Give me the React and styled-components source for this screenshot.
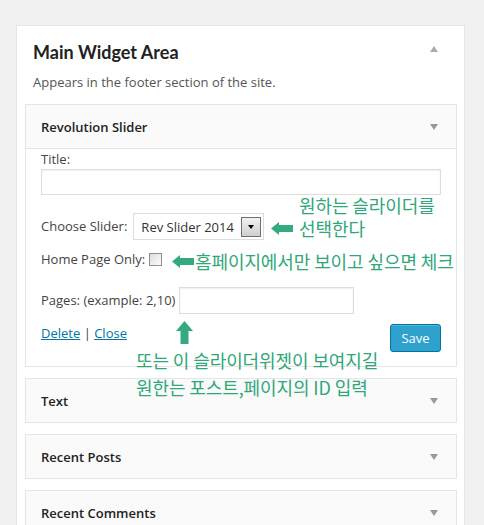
import React from 'react';
import styled, { createGlobalStyle } from 'styled-components';

const GlobalStyle = createGlobalStyle`
  html, body {
    margin: 0;
    padding: 0;
    background: #f1f1f1;
    font-family: "Open Sans", "Noto Sans", sans-serif;
    font-size: 13px;
    color: #444;
  }
`;

const Page = styled.div`
  padding: 25px 19px 0 16px;
  height: 500px;
  overflow: hidden;
`;

const Sidebar = styled.div`
  background: #fff;
  border: 1px solid #e5e5e5;
  border-bottom: none;
  padding: 0 7px 20px 8px;
  width: 432px;
`;

const SidebarHead = styled.div`
  position: relative;
  padding: 14px 8px 0 8px;
  height: 78px;
  box-sizing: border-box;

  h3 {
    margin: 0;
    font-family: Lato, "Open Sans", sans-serif;
    font-size: 18px;
    font-weight: 700;
    color: #222;
    line-height: 24px;
  }

  p {
    margin: 8px 0 0;
    font-size: 13px;
    color: #555;
    line-height: 20px;
  }
`;

const Triangle = styled.span`
  position: absolute;
  right: ${(p) => p.$right}px;
  top: ${(p) => p.$top}px;
  width: 0;
  height: 0;
  border-left: 4px solid transparent;
  border-right: 4px solid transparent;
  ${(p) =>
    p.$up
      ? 'border-bottom: 6px solid #aaa;'
      : 'border-top: 6px solid #999;'}
`;

const WidgetList = styled.div`
  display: flex;
  flex-direction: column;
  gap: 11px;
`;

const Widget = styled.div`
  position: relative;
  border: 1px solid #e5e5e5;
  background: #fafafa;
`;

const WidgetTop = styled.div`
  position: relative;
  height: 43px;
  display: flex;
  align-items: center;
  padding: 0 15px;
  font-weight: 600;
  color: #222;
  font-size: 13px;
  border-bottom: ${(p) => (p.$open ? '1px solid #e5e5e5' : 'none')};
`;

const WidgetBody = styled.div`
  background: #fff;
  padding: 0 15px 14px;
  display: flex;
  flex-direction: column;
`;

const Label = styled.label`
  line-height: 19px;
  color: #444;
`;

const TextInput = styled.input`
  box-sizing: border-box;
  height: ${(p) => p.$h || 26}px;
  width: ${(p) => (p.$w ? `${p.$w}px` : '100%')};
  border: 1px solid #ddd;
  box-shadow: inset 0 1px 2px rgba(0, 0, 0, 0.07);
  margin: 0;
  padding: 3px 5px;
  font: inherit;
`;

const Row = styled.div`
  display: flex;
  align-items: center;
  gap: ${(p) => p.$gap || 4}px;
  margin-top: ${(p) => p.$mt}px;
`;

const SelectBox = styled.div`
  box-sizing: border-box;
  width: 131px;
  height: 27px;
  border: 1px solid #ddd;
  display: flex;
  align-items: center;
  justify-content: space-between;
  padding: 0 2px 0 7px;
  font-size: 13px;
  color: #333;
  background: #fff;
`;

const DropButton = styled.span`
  width: 20px;
  height: 20px;
  box-sizing: border-box;
  border: 1px solid #707070;
  background: linear-gradient(#f2f2f2, #cfcfcf);
  display: flex;
  align-items: center;
  justify-content: center;

  &::after {
    content: '';
    border-left: 3px solid transparent;
    border-right: 3px solid transparent;
    border-top: 4px solid #000;
  }
`;

const Check = styled.span`
  width: 11px;
  height: 11px;
  border: 1px solid #8f8f8f;
  background: linear-gradient(135deg, #dcdcdc, #fdfdfd);
  display: inline-block;
  margin-left: 1px;
`;

const Actions = styled.div`
  display: flex;
  justify-content: space-between;
  align-items: flex-start;
  margin-top: 9px;
`;

const Links = styled.div`
  margin-top: 1px;
  color: #444;

  a {
    color: #0074a2;
    text-decoration: underline;
  }
`;

const SaveButton = styled.button`
  height: 28px;
  width: 51px;
  background: #2ea2cc;
  border: 1px solid #0074a2;
  border-radius: 3px;
  box-shadow: inset 0 1px 0 rgba(120, 200, 230, 0.5);
  color: #fff;
  font: inherit;
  font-size: 13px;
  padding: 0;
  margin-top: 1px;
`;

const Callout = styled.div`
  position: absolute;
  z-index: 2;
  left: ${(p) => p.$x}px;
  top: ${(p) => p.$y}px;
  display: flex;
  flex-direction: ${(p) => (p.$column ? 'column' : 'row')};
  align-items: ${(p) => p.$align || 'center'};
  gap: ${(p) => p.$gap || 5}px;
  color: #2fa779;
  font-family: "Noto Sans CJK KR", "Noto Sans", sans-serif;
  font-size: 18px;
  line-height: ${(p) => p.$lh || 23}px;
  letter-spacing: -0.1px;
  white-space: nowrap;
  pointer-events: none;
`;

const Note = styled.div`
  margin-left: ${(p) => p.$ml || 0}px;
  margin-top: ${(p) => p.$mt || 0}px;
  display: flex;
`;

const LeftArrow = () => (
  <svg width="22" height="13" viewBox="0 0 22 13">
    <path d="M0 6.5 L8 0 L8 3 L22 3 L22 10 L8 10 L8 13 Z" fill="#34ab7e" />
  </svg>
);

const UpArrow = () => (
  <svg width="17" height="23" viewBox="0 0 17 23">
    <path d="M8.5 0 L17 10 L12.5 10 L12.5 23 L4.5 23 L4.5 10 L0 10 Z" fill="#34ab7e" />
  </svg>
);

const Collapsed = ({ title }) => (
  <Widget>
    <WidgetTop>
      {title}
      <Triangle $right={18} $top={19} />
    </WidgetTop>
  </Widget>
);

export default function App() {
  return (
    <>
      <GlobalStyle />
      <Page>
        <Sidebar>
          <SidebarHead>
            <h3>Main Widget Area</h3>
            <p>Appears in the footer section of the site.</p>
            <Triangle $up $right={19} $top={20} />
          </SidebarHead>
          <WidgetList>
            <Widget>
              <WidgetTop $open>
                Revolution Slider
                <Triangle $right={18} $top={19} />
              </WidgetTop>
              <WidgetBody>
                <Label style={{ marginTop: 1 }}>Title:</Label>
                <TextInput type="text" />
                <Row $mt={18} $gap={6}>
                  <Label>Choose Slider:</Label>
                  <SelectBox>
                    Rev Slider 2014
                    <DropButton />
                  </SelectBox>
                </Row>
                <Row $mt={10} $gap={3}>
                  <Label>Home Page Only:</Label>
                  <Check />
                </Row>
                <Row $mt={18} $gap={4}>
                  <Label>Pages: (example: 2,10)</Label>
                  <TextInput type="text" $w={175} $h={27} />
                </Row>
                <Actions>
                  <Links>
                    <a>Delete</a> | <a>Close</a>
                  </Links>
                  <SaveButton>Save</SaveButton>
                </Actions>
              </WidgetBody>

              <Callout $x={245} $y={89} $gap={6} $align="flex-start">
                <Note $mt={28}>
                  <LeftArrow />
                </Note>
                <div>
                  <div>원하는 슬라이더를</div>
                  <div>선택한다</div>
                </div>
              </Callout>
              <Callout $x={146} $y={145} $gap={1}>
                <LeftArrow />
                <div>홈페이지에서만 보이고 싶으면 체크</div>
              </Callout>
              <Callout $x={110} $y={216} $column $align="flex-start" $gap={0} $lh={22}>
                <Note $ml={40}>
                  <UpArrow />
                </Note>
                <div>또는 이 슬라이더위젯이 보여지길</div>
                <div>원한는 포스트,페이지의 ID 입력</div>
              </Callout>
            </Widget>
            <Collapsed title="Text" />
            <Collapsed title="Recent Posts" />
            <Collapsed title="Recent Comments" />
          </WidgetList>
        </Sidebar>
      </Page>
    </>
  );
}
